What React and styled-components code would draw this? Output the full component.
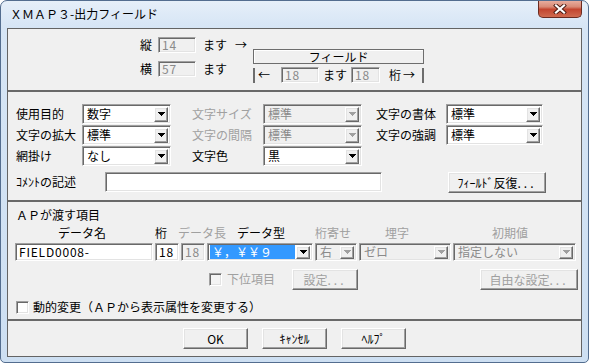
import React from 'react'
import styled, { createGlobalStyle } from 'styled-components'

const GlobalStyle = createGlobalStyle`
  html, body {
    margin: 0;
    padding: 0;
    background: #ffffff;
  }
  body {
    font-family: "Noto Sans CJK JP", "Noto Sans", sans-serif;
    font-size: 12px;
    color: #000;
  }
`

const sunken = `
  border: 1px solid;
  border-color: #a0a0a0 #ffffff #ffffff #a0a0a0;
  box-shadow: inset 1px 1px 0 #696969, inset -1px -1px 0 #e3e3e3;
`

const raised = `
  border: 1px solid;
  border-color: #ffffff #696969 #696969 #ffffff;
  box-shadow: inset -1px -1px 0 #a0a0a0, inset 1px 1px 0 #e3e3e3;
  background: #f0f0f0;
`

const Window = styled.div`
  box-sizing: border-box;
  width: 589px;
  height: 363px;
  border: 1px solid #536d8f;
  border-radius: 7px 7px 5px 5px;
  background: linear-gradient(180deg, #e6eff9 0px, #d6e5f5 26px, #cddff2 100%);
  padding: 0 6px 5px 6px;
  display: flex;
  flex-direction: column;
  overflow: hidden;
`

const TitleBar = styled.div`
  height: 27px;
  display: flex;
  align-items: flex-start;
  flex-shrink: 0;
`

const TitleText = styled.div`
  margin-left: 3px;
  line-height: 26px;
  font-size: 12px;
  color: #000;
`

const CloseButton = styled.div`
  margin-left: auto;
  margin-top: -1px;
  width: 44px;
  height: 18px;
  box-sizing: border-box;
  border: 1px solid #6b2b20;
  border-top: none;
  border-radius: 0 0 5px 5px;
  background: linear-gradient(180deg, #eab2a4 0%, #d98a76 40%, #c3452f 55%, #cf6a4f 100%);
  display: flex;
  align-items: center;
  justify-content: center;
`

const Client = styled.div`
  box-sizing: border-box;
  flex: 1;
  border: 1px solid #646464;
  background: #f0f0f0;
  display: flex;
  flex-direction: column;
`

const Section = styled.div`
  box-sizing: border-box;
  height: ${p => p.$h}px;
  flex-shrink: 0;
  border-top: ${p => (p.$sep ? '2px solid #696969' : 'none')};
`

const Label = styled.span`
  display: inline-block;
  white-space: nowrap;
  color: ${p => (p.$disabled ? '#a0a0a0' : '#000')};
  margin-left: ${p => p.$ml || 0}px;
  width: ${p => (p.$w ? `${p.$w}px` : 'auto')};
  flex-shrink: 0;
  line-height: 14px;
`

const TextBox = styled.div`
  box-sizing: border-box;
  ${sunken}
  width: ${p => (p.$w ? `${p.$w}px` : '100%')};
  height: ${p => p.$h || 16}px;
  margin-left: ${p => p.$ml || 0}px;
  background: ${p => (p.$disabled ? '#f0f0f0' : '#ffffff')};
  color: ${p => (p.$disabled ? '#8a8a8a' : '#000')};
  display: flex;
  align-items: center;
  padding: 0 3px;
  white-space: nowrap;
  line-height: 14px;
  letter-spacing: 0.8px;
  flex-shrink: 0;
`

const ComboBox = styled.div`
  box-sizing: border-box;
  ${sunken}
  width: ${p => (p.$w ? `${p.$w}px` : '100%')};
  height: ${p => p.$h || 20}px;
  background: ${p => (p.$disabled ? '#f0f0f0' : '#ffffff')};
  display: flex;
  align-items: center;
  padding: 1px 2px;
`

const ComboValue = styled.div`
  flex: 1;
  align-self: stretch;
  display: flex;
  align-items: center;
  padding-left: 2px;
  margin-right: 1px;
  white-space: nowrap;
  line-height: 14px;
  color: ${p => (p.$disabled ? '#8a8a8a' : p.$selected ? '#ffffff' : '#000')};
  background: ${p => (p.$selected ? '#3399ff' : 'transparent')};
`

const DropButton = styled.div`
  box-sizing: border-box;
  ${raised}
  width: 14px;
  height: ${p => p.$h || 14}px;
  display: flex;
  align-items: center;
  justify-content: center;
  flex-shrink: 0;
`

const PushButton = styled.div`
  box-sizing: border-box;
  ${raised}
  width: ${p => p.$w}px;
  height: ${p => p.$h || 21}px;
  margin-left: ${p => p.$ml || 0}px;
  display: flex;
  align-items: center;
  justify-content: center;
  white-space: nowrap;
  flex-shrink: 0;
  color: ${p => (p.$disabled ? '#a0a0a0' : '#000')};
`

const Dots = styled.span`
  letter-spacing: 3px;
`

const CheckBox = styled.div`
  box-sizing: border-box;
  ${sunken}
  width: 13px;
  height: 13px;
  margin-left: ${p => p.$ml || 0}px;
  background: ${p => (p.$disabled ? '#f4f4f4' : '#ffffff')};
  flex-shrink: 0;
`

/* section 1 */
const SizeArea = styled.div`
  display: flex;
  padding: 8px 0 0 132px;
`

const SizeBlock = styled.div`
  display: flex;
  flex-direction: column;
  gap: 8px;
`

const Line = styled.div`
  display: flex;
  align-items: center;
  height: 16px;
`

const FieldBlock = styled.div`
  margin-left: 6px;
  padding-top: 12px;
  display: flex;
  flex-direction: column;
`

const FieldBox = styled.div`
  box-sizing: border-box;
  width: 171px;
  height: 15px;
  border: 1px solid #6d6d6d;
  box-shadow: inset 1px 1px 0 #ffffff;
  text-align: center;
  line-height: 13px;
`

const RangeRow = styled.div`
  display: flex;
  align-items: center;
  height: 16px;
  margin-top: 3px;
`

const Bar = styled.div`
  width: 2px;
  height: 15px;
  background: #6d6d6d;
  margin-left: ${p => p.$ml || 0}px;
  flex-shrink: 0;
`

/* section 2 */
const AttrGrid = styled.div`
  display: grid;
  grid-template-columns: 66px 89px 92px 99px 84px 97px;
  grid-auto-rows: 20px;
  row-gap: 1px;
  padding: 12px 0 0 8px;
  align-items: center;
`

const GridLabel = styled(Label)`
  padding-left: ${p => p.$pl || 0}px;
`

const CommentRow = styled.div`
  display: flex;
  align-items: center;
  height: 20px;
  margin-top: 6px;
  padding-left: 8px;
`

/* section 3 */
const ApArea = styled.div`
  padding: 6px 0 0 7px;
`

const ApTitle = styled.div`
  height: 14px;
  line-height: 14px;
  padding-left: 1px;
`

const HeaderRow = styled.div`
  display: flex;
  height: 14px;
  margin-top: 4px;
`

const ItemGrid = styled.div`
  display: grid;
  grid-template-columns: 138px 24px 24px 106px 42px 92px 123px;
  column-gap: 2px;
  height: 18px;
  margin-top: 3px;
`

const OptionRow = styled.div`
  display: flex;
  align-items: center;
  height: 20px;
  margin-top: 8px;
`

const DynamicRow = styled.div`
  display: flex;
  align-items: center;
  height: 16px;
  margin-top: 10px;
`

/* section 4 */
const ButtonBar = styled.div`
  display: flex;
  justify-content: center;
  gap: 14px;
  padding-top: 7px;
`

const DownArrow = ({ disabled }) => (
  <svg width="7" height="4" viewBox="0 0 7 4" shapeRendering="crispEdges">
    <polygon points="0,0 7,0 3.5,4" fill={disabled ? '#a0a0a0' : '#000'} />
  </svg>
)

const Combo = ({ w, h = 20, value, disabled, selected }) => (
  <ComboBox $w={w} $h={h} $disabled={disabled}>
    <ComboValue $disabled={disabled} $selected={selected}>{value}</ComboValue>
    <DropButton $h={h - 5}>
      <DownArrow disabled={disabled} />
    </DropButton>
  </ComboBox>
)

const CloseGlyph = () => (
  <svg width="14" height="10" viewBox="0 0 14 10">
    <path d="M3 1.5 L11 8.5 M11 1.5 L3 8.5" stroke="#4a1a12" strokeWidth="4" strokeLinecap="square" />
    <path d="M3 1.5 L11 8.5 M11 1.5 L3 8.5" stroke="#ffffff" strokeWidth="2.2" strokeLinecap="square" />
  </svg>
)

export default function App() {
  return (
    <>
      <GlobalStyle />
      <Window>
        <TitleBar>
          <TitleText>ＸＭＡＰ３-出力フィールド</TitleText>
          <CloseButton>
            <CloseGlyph />
          </CloseButton>
        </TitleBar>
        <Client>
          <Section $h={61}>
            <SizeArea>
              <SizeBlock>
                <Line>
                  <Label $w={12}>縦</Label>
                  <TextBox $w={38} $ml={6} $disabled>14</TextBox>
                  <Label $w={24} $ml={7}>ます</Label>
                  <Label $ml={8}>→</Label>
                </Line>
                <Line>
                  <Label $w={12}>横</Label>
                  <TextBox $w={38} $ml={6} $disabled>57</TextBox>
                  <Label $w={24} $ml={7}>ます</Label>
                </Line>
              </SizeBlock>
              <FieldBlock>
                <FieldBox>フィールド</FieldBox>
                <RangeRow>
                  <Bar />
                  <Label $w={12} $ml={3}>←</Label>
                  <TextBox $w={38} $ml={11} $disabled>18</TextBox>
                  <Label $w={24} $ml={4}>ます</Label>
                  <TextBox $w={29} $ml={4} $disabled>18</TextBox>
                  <Label $w={12} $ml={9}>桁</Label>
                  <Label $w={12} $ml={2}>→</Label>
                  <Bar $ml={7} />
                </RangeRow>
              </FieldBlock>
            </SizeArea>
          </Section>

          <Section $h={110} $sep>
            <AttrGrid>
              <GridLabel>使用目的</GridLabel>
              <Combo w={89} value="数字" />
              <GridLabel $pl={21} $disabled>文字サイズ</GridLabel>
              <Combo w={99} value="標準" disabled />
              <GridLabel $pl={14}>文字の書体</GridLabel>
              <Combo w={97} value="標準" />

              <GridLabel>文字の拡大</GridLabel>
              <Combo w={89} value="標準" />
              <GridLabel $pl={21} $disabled>文字の間隔</GridLabel>
              <Combo w={99} value="標準" disabled />
              <GridLabel $pl={14}>文字の強調</GridLabel>
              <Combo w={97} value="標準" />

              <GridLabel>網掛け</GridLabel>
              <Combo w={89} value="なし" />
              <GridLabel $pl={21}>文字色</GridLabel>
              <Combo w={99} value="黒" />
            </AttrGrid>
            <CommentRow>
              <Label $w={89}>ｺﾒﾝﾄの記述</Label>
              <TextBox $w={277} $h={20} />
              <PushButton $w={98} $h={21} $ml={66}>
                ﾌｨｰﾙﾄﾞ反復<Dots>...</Dots>
              </PushButton>
            </CommentRow>
          </Section>

          <Section $h={119} $sep>
            <ApArea>
              <ApTitle>ＡＰが渡す項目</ApTitle>
              <HeaderRow>
                <Label $w={48} $ml={43}>データ名</Label>
                <Label $w={12} $ml={49}>桁</Label>
                <Label $w={48} $ml={11} $disabled>データ長</Label>
                <Label $w={48} $ml={11}>データ型</Label>
                <Label $w={36} $ml={30} $disabled>桁寄せ</Label>
                <Label $w={24} $ml={34} $disabled>埋字</Label>
                <Label $w={36} $ml={83} $disabled>初期値</Label>
              </HeaderRow>
              <ItemGrid>
                <TextBox $h={18}>FIELD0008-</TextBox>
                <TextBox $h={18}>18</TextBox>
                <TextBox $h={18} $disabled>18</TextBox>
                <Combo h={18} value="￥，￥￥９" selected />
                <Combo h={18} value="右" disabled />
                <Combo h={18} value="ゼロ" disabled />
                <Combo h={18} value="指定しない" disabled />
              </ItemGrid>
              <OptionRow>
                <CheckBox $ml={194} $disabled />
                <Label $w={48} $ml={5} $disabled>下位項目</Label>
                <PushButton $w={66} $h={21} $ml={17} $disabled>
                  設定<Dots>...</Dots>
                </PushButton>
                <PushButton $w={98} $h={21} $ml={122} $disabled>
                  自由な設定<Dots>...</Dots>
                </PushButton>
              </OptionRow>
              <DynamicRow>
                <CheckBox $ml={1} />
                <Label $ml={4}>動的変更（ＡＰから表示属性を変更する）</Label>
              </DynamicRow>
            </ApArea>
          </Section>

          <Section $h={37} $sep>
            <ButtonBar>
              <PushButton $w={65}>OK</PushButton>
              <PushButton $w={65}>ｷｬﾝｾﾙ</PushButton>
              <PushButton $w={65}>ﾍﾙﾌﾟ</PushButton>
            </ButtonBar>
          </Section>
        </Client>
      </Window>
    </>
  )
}
